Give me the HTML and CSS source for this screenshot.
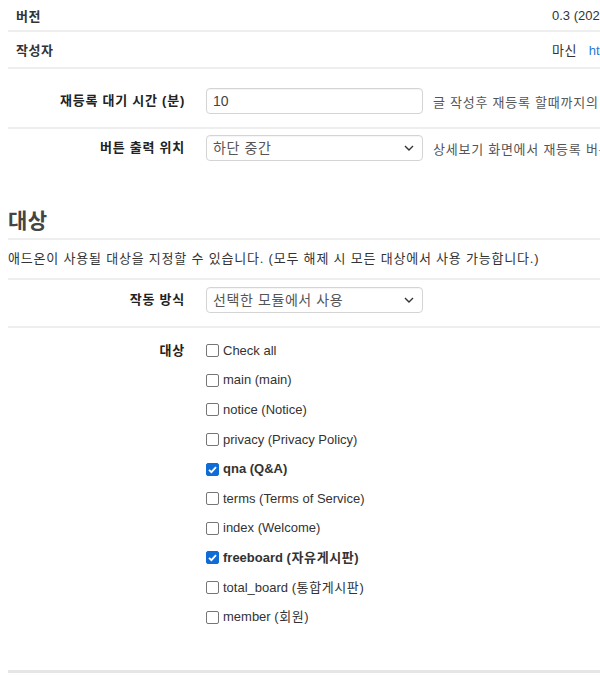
FILE: index.html
```html
<!DOCTYPE html>
<html lang="ko">
<head>
<meta charset="utf-8">
<link rel="stylesheet" href="styles.css">
</head>
<body>
<div class="page">
  <div class="info-row">
    <div class="info-label">버전</div>
    <div class="info-value">0.3 (2024-01-01)</div>
  </div>
  <div class="info-row">
    <div class="info-label">작성자</div>
    <div class="info-value"><span class="ko">마신</span> <a class="link">https://example.com</a></div>
  </div>

  <div class="form-row first">
    <div class="form-label">재등록 대기 시간 (분)</div>
    <div class="form-field">
      <div class="input">10</div>
      <span class="help">글 작성후 재등록 할때까지의 대기 시간</span>
    </div>
  </div>
  <div class="form-row second">
    <div class="form-label">버튼 출력 위치</div>
    <div class="form-field">
      <div class="select"><span class="ko">하단 중간</span><svg class="chev" viewBox="0 0 10 6" width="10" height="6"><path d="M1 1l4 4 4-4" fill="none" stroke="#333" stroke-width="1.4"/></svg></div>
      <span class="help">상세보기 화면에서 재등록 버튼의 위치</span>
    </div>
  </div>

  <h2 class="section-title">대상</h2>
  <p class="section-desc">애드온이 사용될 대상을 지정할 수 있습니다. (모두 해제 시 모든 대상에서 사용 가능합니다.)</p>

  <div class="form-row mode">
    <div class="form-label">작동 방식</div>
    <div class="form-field">
      <div class="select"><span class="ko">선택한 모듈에서 사용</span><svg class="chev" viewBox="0 0 10 6" width="10" height="6"><path d="M1 1l4 4 4-4" fill="none" stroke="#333" stroke-width="1.4"/></svg></div>
    </div>
  </div>

  <div class="form-row targets">
    <div class="form-label">대상</div>
    <div class="checks">
      <label class="check"><span class="box"></span>Check all</label>
      <label class="check"><span class="box"></span>main (main)</label>
      <label class="check"><span class="box"></span>notice (Notice)</label>
      <label class="check"><span class="box"></span>privacy (Privacy Policy)</label>
      <label class="check on"><span class="box"><svg viewBox="0 0 13 13" width="13" height="13"><path d="M3 6.8l2.4 2.4L10 4.2" fill="none" stroke="#fff" stroke-width="1.8"/></svg></span>qna (Q&amp;A)</label>
      <label class="check"><span class="box"></span>terms (Terms of Service)</label>
      <label class="check"><span class="box"></span>index (Welcome)</label>
      <label class="check on"><span class="box"><svg viewBox="0 0 13 13" width="13" height="13"><path d="M3 6.8l2.4 2.4L10 4.2" fill="none" stroke="#fff" stroke-width="1.8"/></svg></span>freeboard&nbsp;<span class="ko">(자유게시판)</span></label>
      <label class="check"><span class="box"></span>total_board&nbsp;<span class="ko">(통합게시판)</span></label>
      <label class="check"><span class="box"></span>member&nbsp;<span class="ko">(회원)</span></label>
    </div>
  </div>
</div>
</body>
</html>
```

FILE: styles.css
```css
html, body {
  margin: 0;
  padding: 0;
  overflow: hidden;
  background: #fff;
}
body {
  font-family: "Liberation Sans", "Noto Sans CJK KR", sans-serif;
  font-size: 13px;
  color: #333;
  width: 600px;
  height: 676px;
}
.ko {
  letter-spacing: 0.6px;
}
.page {
  padding: 0 0 0 8px;
  width: 592px;
}
.info-row {
  display: flex;
  align-items: center;
  height: 35px;
  border-bottom: 2px solid #eee;
  white-space: nowrap;
}
.info-row:first-child {
  height: 30px;
}
.info-label {
  font-weight: bold;
  padding-left: 8px;
  width: 536px;
  flex-shrink: 0;
  letter-spacing: 0.6px;
}
.info-value {
  flex-shrink: 0;
}
.link {
  color: #1e7bd6;
  margin-left: 8px;
}
.form-row {
  display: flex;
  white-space: nowrap;
}
.form-row.first {
  padding: 19px 0 13px;
  border-bottom: 2px solid #eee;
  align-items: center;
}
.form-row.second {
  padding: 6px 0 0;
  align-items: center;
}
.form-row.mode {
  padding: 7px 0 13px;
  border-bottom: 2px solid #eee;
  align-items: center;
}
.form-row.targets {
  padding: 13px 0 38px;
  border-bottom: 3px solid #e6e6e6;
  align-items: flex-start;
}
.form-label {
  width: 177px;
  text-align: right;
  font-weight: bold;
  flex-shrink: 0;
  line-height: 20px;
  letter-spacing: 0.75px;
  color: #222;
}
.form-field {
  display: flex;
  align-items: center;
  margin-left: 21px;
  flex-shrink: 0;
}
.input, .select {
  box-sizing: border-box;
  width: 217px;
  height: 26px;
  border: 1px solid #d4d4d4;
  border-radius: 4px;
  padding: 0 6px;
  line-height: 24px;
  font-size: 14px;
  color: #444;
  display: flex;
  align-items: center;
  justify-content: space-between;
  box-shadow: inset 0 1px 1px rgba(0,0,0,0.04);
}
.select {
  color: #555;
}
.chev {
  margin-right: 2px;
}
.help {
  margin-left: 10px;
  color: #555;
  letter-spacing: 0.75px;
}
.section-title {
  margin: 46px 0 0;
  font-size: 21px;
  font-weight: bold;
  color: #444;
  line-height: 28px;
  padding-bottom: 3px;
  border-bottom: 2px solid #eee;
  letter-spacing: 0.5px;
}
.section-desc {
  margin: 0;
  padding: 9px 0 10px;
  line-height: 19px;
  border-bottom: 2px solid #eee;
  white-space: nowrap;
  color: #333;
  letter-spacing: 0.8px;
}
.checks {
  display: flex;
  flex-direction: column;
  margin-left: 21px;
}
.check {
  display: flex;
  align-items: center;
  height: 29.6px;
  line-height: 20px;
  margin-top: -5px;
}
.check + .check {
  margin-top: 0;
}
.box {
  box-sizing: border-box;
  width: 13px;
  height: 13px;
  border: 1px solid #767676;
  border-radius: 2px;
  margin-right: 4px;
  display: flex;
  background: #fff;
}
.check.on {
  font-weight: bold;
}
.check.on .box {
  background: #0f6cd6;
  border-color: #0f6cd6;
}
.check.on .box svg {
  margin: -1px;
}
```
